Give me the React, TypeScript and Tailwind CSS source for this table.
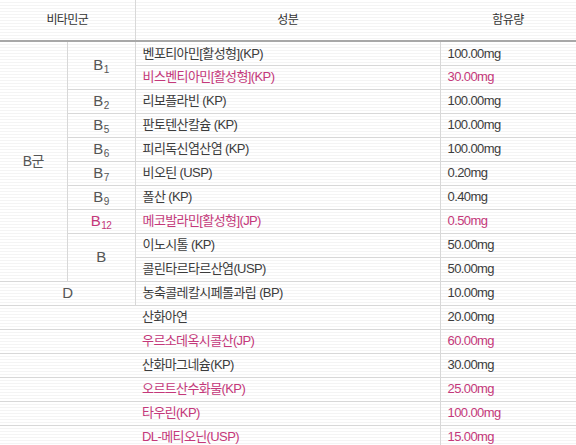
import React from 'react';

type Row = {
  name: string;
  amount: string;
  pink?: boolean;
};

const PINK = 'text-[#c4387a]';

const Sub: React.FC<{ base: string; n?: string; pink?: boolean }> = ({ base, n, pink }) => (
  <span className={`text-[15px] ${pink ? PINK : 'text-[#555]'}`}>
    {base}
    {n && <span className="text-[10px] relative top-[3px] ml-[1px]">{n}</span>}
  </span>
);

const NameCell: React.FC<{ row: Row }> = ({ row }) => (
  <>
    <td className={`h-6 border-b border-[#d8d8d8] pl-[7px] ${row.pink ? PINK : 'text-[#3c3c3c]'}`}>{row.name}</td>
    <td className={`h-6 border-b border-l border-[#d8d8d8] pl-[7px] ${row.pink ? PINK : 'text-[#3c3c3c]'}`}>{row.amount}</td>
  </>
);

const extra: Row[] = [
  { name: '우르소데옥시콜산(JP)', amount: '60.00mg', pink: true },
  { name: '산화마그네슘(KP)', amount: '30.00mg' },
  { name: '오르트산수화물(KP)', amount: '25.00mg', pink: true },
  { name: '타우린(KP)', amount: '100.00mg', pink: true },
  { name: 'DL-메티오닌(USP)', amount: '15.00mg', pink: true },
];

const cell = 'border-b border-r border-[#d8d8d8] text-center';

export default function App() {
  return (
    <div className="w-[576px] h-[445px] overflow-hidden bg-[repeating-linear-gradient(to_bottom,#ffffff_0px,#ffffff_2px,#f4f4f4_2px,#f4f4f4_3px)] font-['Liberation_Sans','Noto_Sans_CJK_KR',sans-serif] text-[13px] tracking-[-0.6px]">
      <table className="w-full border-collapse table-fixed">
        <colgroup>
          <col className="w-[67px]" />
          <col className="w-[68px]" />
          <col className="w-[305px]" />
          <col />
        </colgroup>
        <thead>
          <tr>
            <th colSpan={2} className="h-[41px] border-b-2 border-r border-b-[#a8a8a8] border-r-[#d8d8d8] font-normal text-[#333] text-[12px]">비타민군</th>
            <th className="h-[41px] border-b-2 border-[#a8a8a8] font-normal text-[#333] text-[12px]">성분</th>
            <th className="h-[41px] border-b-2 border-[#a8a8a8] font-normal text-[#333] text-[12px]">함유량</th>
          </tr>
        </thead>
        <tbody>
          <tr>
            <td rowSpan={10} className={`${cell} text-[#555] text-[14px]`}>B군</td>
            <td rowSpan={2} className={cell}><Sub base="B" n="1" /></td>
            <NameCell row={{ name: '벤포티아민[활성형](KP)', amount: '100.00mg' }} />
          </tr>
          <tr>
            <NameCell row={{ name: '비스벤티아민[활성형](KP)', amount: '30.00mg', pink: true }} />
          </tr>
          <tr>
            <td className={cell}><Sub base="B" n="2" /></td>
            <NameCell row={{ name: '리보플라빈 (KP)', amount: '100.00mg' }} />
          </tr>
          <tr>
            <td className={cell}><Sub base="B" n="5" /></td>
            <NameCell row={{ name: '판토텐산칼슘 (KP)', amount: '100.00mg' }} />
          </tr>
          <tr>
            <td className={cell}><Sub base="B" n="6" /></td>
            <NameCell row={{ name: '피리독신염산염 (KP)', amount: '100.00mg' }} />
          </tr>
          <tr>
            <td className={cell}><Sub base="B" n="7" /></td>
            <NameCell row={{ name: '비오틴 (USP)', amount: '0.20mg' }} />
          </tr>
          <tr>
            <td className={cell}><Sub base="B" n="9" /></td>
            <NameCell row={{ name: '폴산 (KP)', amount: '0.40mg' }} />
          </tr>
          <tr>
            <td className={cell}><Sub base="B" n="12" pink /></td>
            <NameCell row={{ name: '메코발라민[활성형](JP)', amount: '0.50mg', pink: true }} />
          </tr>
          <tr>
            <td rowSpan={2} className={cell}><Sub base="B" /></td>
            <NameCell row={{ name: '이노시톨 (KP)', amount: '50.00mg' }} />
          </tr>
          <tr>
            <NameCell row={{ name: '콜린타르타르산염(USP)', amount: '50.00mg' }} />
          </tr>
          <tr>
            <td colSpan={2} className={cell}><Sub base="D" /></td>
            <NameCell row={{ name: '농축콜레칼시페롤과립 (BP)', amount: '10.00mg' }} />
          </tr>
          <tr>
            <td colSpan={2} className="border-b border-[#d8d8d8]"></td>
            <NameCell row={{ name: '산화아연', amount: '20.00mg' }} />
          </tr>
          {extra.map((r) => (
            <tr key={r.name}>
              <td colSpan={2} className="border-b border-[#d8d8d8]"></td>
              <NameCell row={r} />
            </tr>
          ))}
        </tbody>
      </table>
    </div>
  );
}
